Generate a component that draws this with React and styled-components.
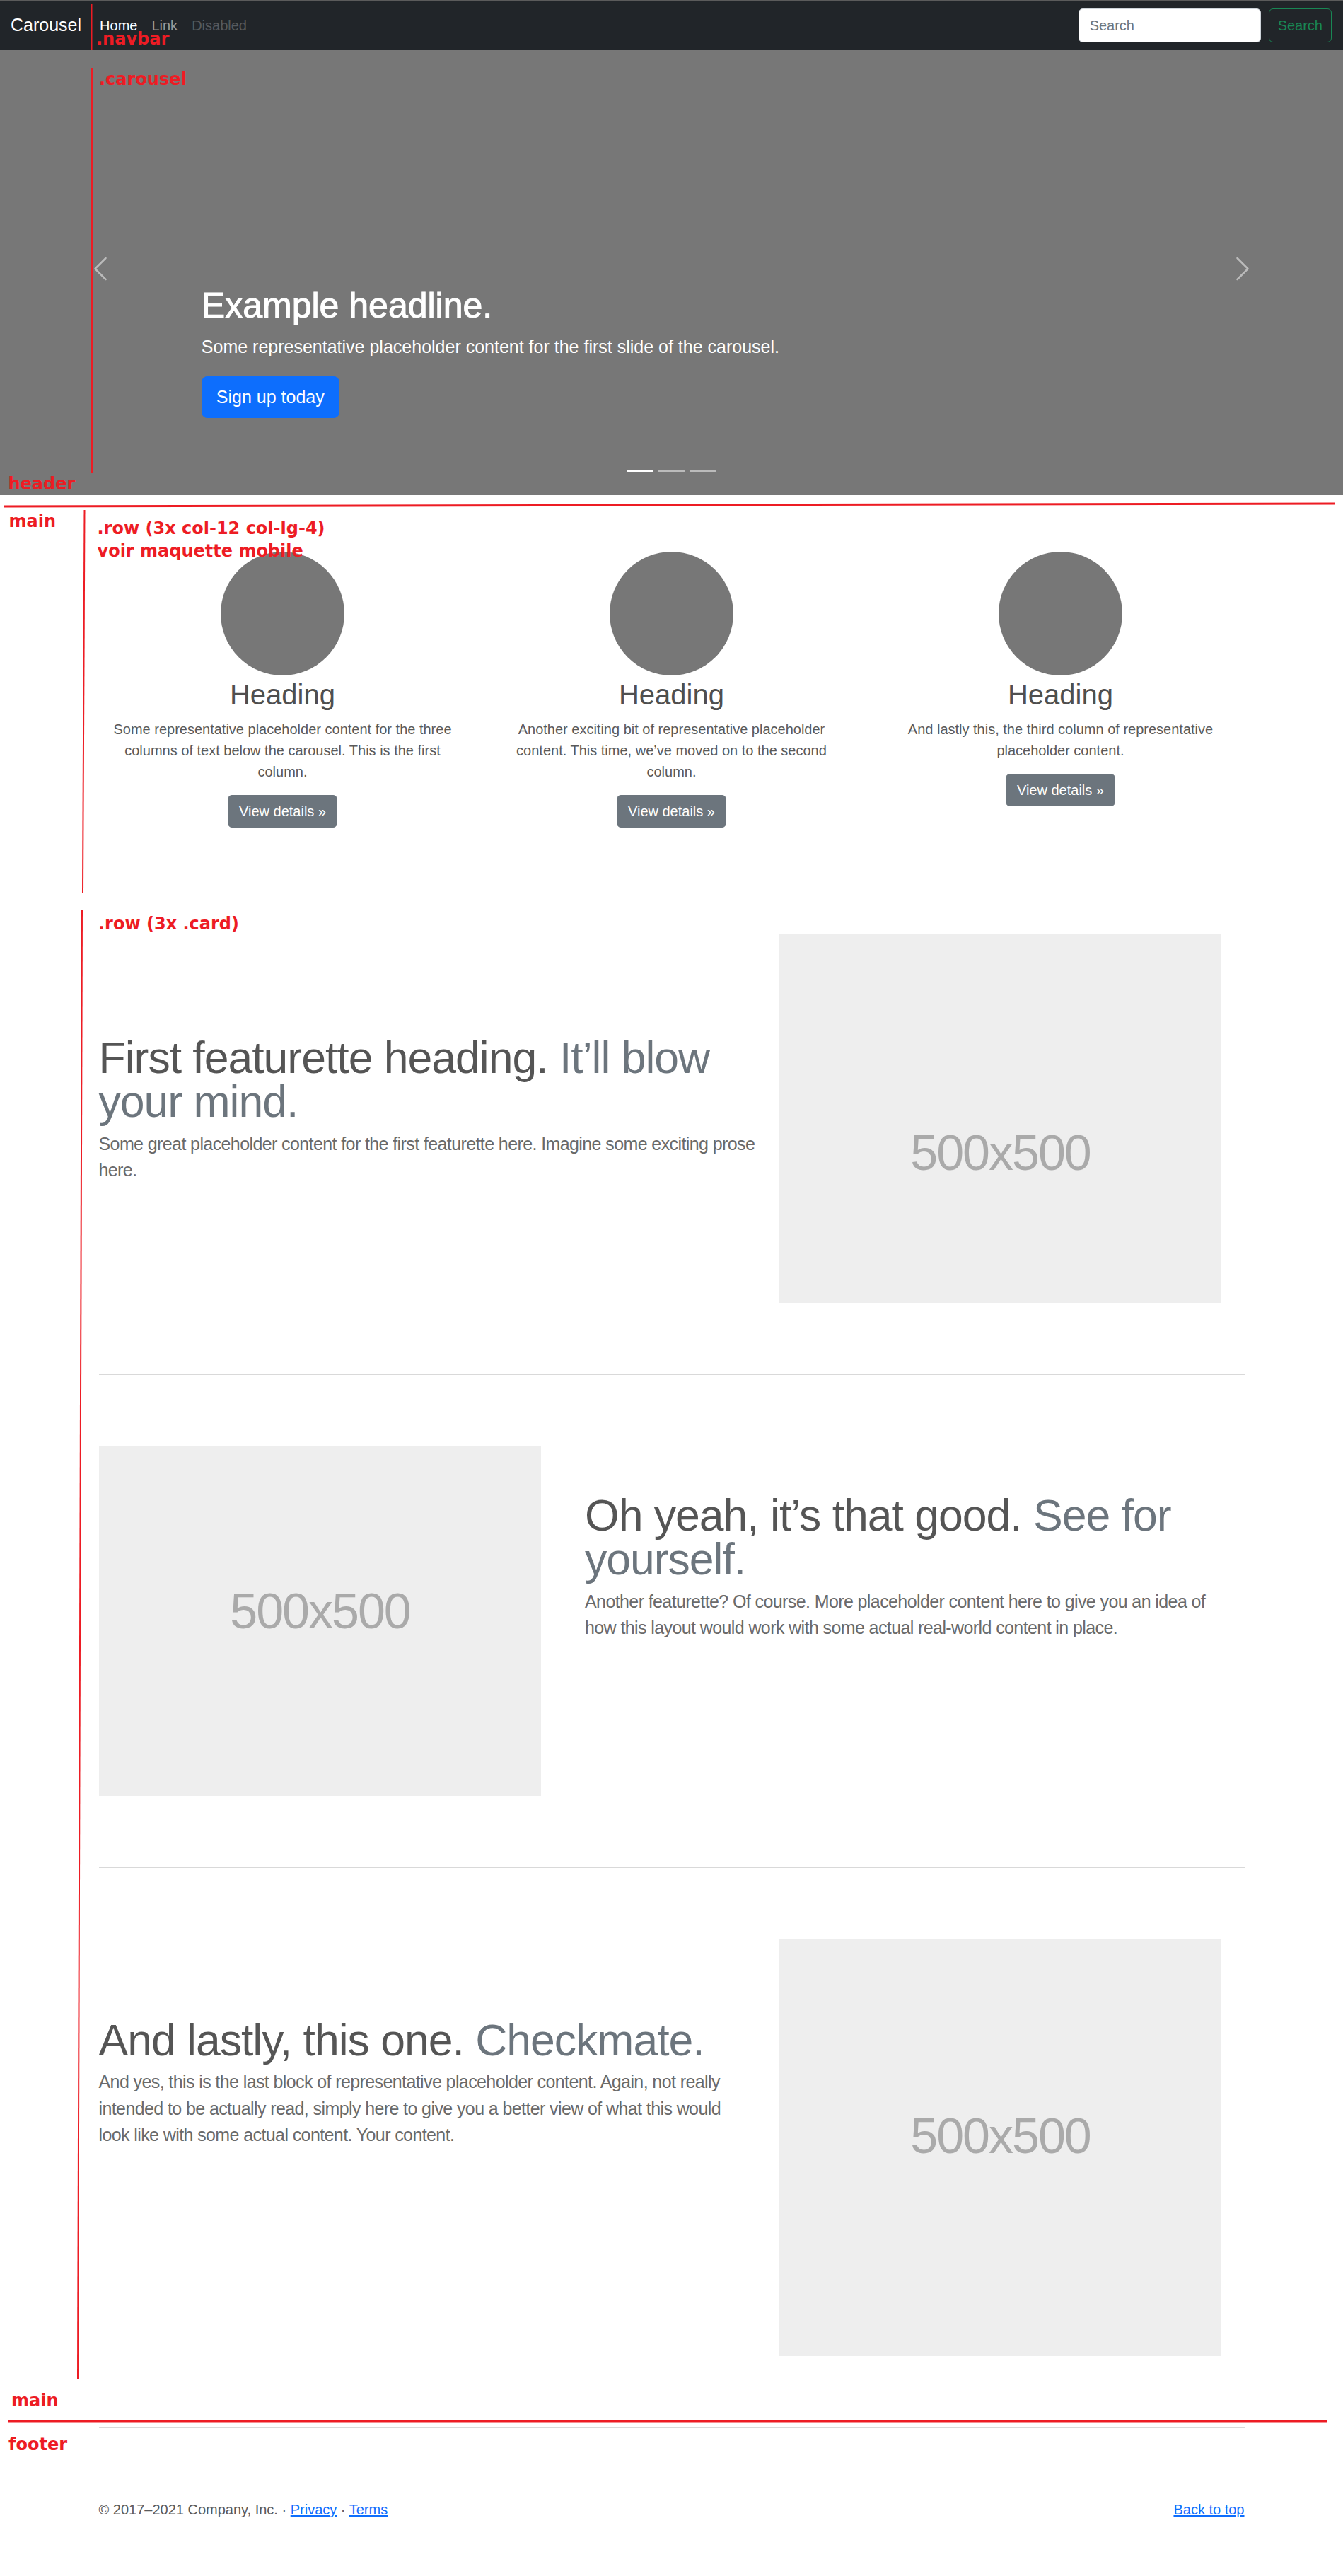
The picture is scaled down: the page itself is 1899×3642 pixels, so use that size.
import React from 'react';
import styled, { createGlobalStyle } from 'styled-components';

const GlobalStyle = createGlobalStyle`
  *, *::before, *::after {
    box-sizing: border-box;
  }
  body {
    margin: 0;
    font-family: "Liberation Sans", Arial, sans-serif;
    font-size: 20px;
    line-height: 1.5;
    color: #5a5a5a;
    background: #fff;
  }
`;

const Page = styled.div`
  position: relative;
  padding-bottom: 56px;
`;

/* ---------- navbar ---------- */

const Navbar = styled.nav`
  display: flex;
  align-items: center;
  height: 71px;
  padding: 0 16px 0 15px;
  background: #212529;
  border-top: 1px solid #5b5b5b;
`;

const Brand = styled.a`
  margin-right: 16px;
  font-size: 25px;
  line-height: 1.5;
  color: #fff;
  text-decoration: none;
`;

const NavLinks = styled.ul`
  display: flex;
  flex: 1;
  margin: 0;
  padding: 0;
  list-style: none;
`;

const linkColors = {
  active: '#fff',
  normal: 'rgba(255, 255, 255, 0.55)',
  disabled: 'rgba(255, 255, 255, 0.25)',
};

const NavLink = styled.a`
  display: block;
  padding: 0 10px;
  color: ${(p) => linkColors[p.$state]};
  text-decoration: none;
`;

const SearchForm = styled.form`
  display: flex;
  gap: 11px;
`;

const SearchInput = styled.input`
  width: 258px;
  height: 48px;
  padding: 7px 15px;
  font-family: inherit;
  font-size: 20px;
  color: #212529;
  background: #fff;
  border: 1px solid #ced4da;
  border-radius: 6px;
  outline: none;
  &::placeholder {
    color: #6c757d;
  }
`;

const OutlineButton = styled.button`
  height: 48px;
  padding: 0 12px;
  font-family: inherit;
  font-size: 20px;
  color: #198754;
  background: transparent;
  border: 1px solid #198754;
  border-radius: 6px;
`;

/* ---------- carousel ---------- */

const Carousel = styled.section`
  position: relative;
  height: 629px;
  background: #777;
`;

const Control = styled.button`
  position: absolute;
  top: -11px;
  bottom: 0;
  ${(p) => p.$side}: 0;
  width: 15%;
  display: flex;
  align-items: center;
  justify-content: center;
  padding: 0;
  background: none;
  border: 0;
  opacity: 0.5;
`;

const Indicators = styled.div`
  position: absolute;
  left: 0;
  right: 0;
  bottom: 32px;
  display: flex;
  justify-content: center;
  gap: 8px;
`;

const Indicator = styled.span`
  width: 37px;
  height: 4px;
  background: #fff;
  opacity: ${(p) => (p.$active ? 1 : 0.5)};
`;

const Caption = styled.div`
  position: absolute;
  left: 15%;
  right: 15%;
  bottom: 109px;
  display: flex;
  flex-direction: column;
  align-items: flex-start;
  color: #fff;
`;

const Headline = styled.h1`
  margin: 0 0 10px;
  font-size: 50px;
  font-weight: 500;
  line-height: 1.2;
  -webkit-text-stroke: 1px #fff;
`;

const CaptionText = styled.p`
  margin: 0 0 22px;
  font-size: 25px;
  line-height: 1.5;
`;

const PrimaryButton = styled.a`
  padding: 10px 20px;
  font-size: 25px;
  line-height: 1.5;
  color: #fff;
  background: #0d6efd;
  border: 1px solid #0d6efd;
  border-radius: 8px;
  text-decoration: none;
`;

/* ---------- marketing ---------- */

const Container = styled.div`
  width: 1650px;
  max-width: 100%;
  margin: 0 auto;
  padding: 0 15px;
`;

const Marketing = styled(Container)`
  margin-top: 80px;
`;

const Row = styled.div`
  display: flex;
  margin: 0 -15px;
`;

const Column = styled.div`
  display: flex;
  flex-direction: column;
  align-items: center;
  width: ${(p) => (p.$span / 12) * 100}%;
  padding: 0 15px;
  text-align: center;
`;

const Circle = styled.div`
  width: 175px;
  height: 175px;
  margin-bottom: 3px;
  border-radius: 50%;
  background: #777;
`;

const ColumnHeading = styled.h2`
  margin: 0 0 10px;
  font-size: 40px;
  font-weight: 400;
  line-height: 1.2;
  color: #4f4f4f;
`;

const ColumnText = styled.p`
  margin: 0 15px 18px;
`;

const SecondaryButton = styled.a`
  padding: 7px 15px;
  color: #fff;
  background: #6c757d;
  border: 1px solid #6c757d;
  border-radius: 6px;
  text-decoration: none;
`;

/* ---------- featurettes ---------- */

const Features = styled(Container)`
  margin-top: 149.5px;
`;

const Featurette = styled.div`
  display: flex;
  flex-direction: ${(p) => (p.$reverse ? 'row-reverse' : 'row')};
  margin: 0 -15px;
`;

const FeatureText = styled.div`
  width: 58.3333%;
  padding: ${(p) => p.$offset}px 15px 0;
`;

const FeatureMedia = styled.div`
  width: 41.6667%;
  padding: 0 15px;
`;

const FeatureHeading = styled.h2`
  margin: 0 0 10px;
  font-size: 62.5px;
  font-weight: 400;
  line-height: 1;
  letter-spacing: -1px;
  color: #555;
`;

const Muted = styled.span`
  color: #6c757d;
`;

const Lead = styled.p`
  margin: 0 0 20px;
  font-size: 25px;
  line-height: 1.5;
  letter-spacing: -0.6px;
  color: #6a6a6a;
`;

const Line = styled.span`
  display: block;
  white-space: nowrap;
`;

const PlaceholderSvg = styled.svg`
  display: block;
  text {
    font-family: "Liberation Sans", Arial, sans-serif;
    font-size: 70px;
    letter-spacing: -2px;
  }
`;

const Divider = styled.hr`
  height: 2px;
  margin: 100px 0;
  border: 0;
  background: #d9d9d9;
`;

/* ---------- footer ---------- */

const Footer = styled(Container)`
  display: flex;
  justify-content: space-between;
`;

const FooterText = styled.p`
  margin: 0 0 20px;
`;

const FooterLink = styled.a`
  color: #0d6efd;
  text-decoration: underline;
`;

/* ---------- annotations ---------- */

const Overlay = styled.div`
  position: absolute;
  inset: 0;
  overflow: hidden;
  pointer-events: none;
`;

const MarkLines = styled.svg`
  position: absolute;
  top: 0;
  left: 0;
`;

const Note = styled.span`
  position: absolute;
  left: ${(p) => p.$x}px;
  top: ${(p) => p.$y}px;
  font-family: "DejaVu Sans", sans-serif;
  font-size: 24px;
  font-weight: 700;
  line-height: 32px;
  color: #ed1c24;
  white-space: nowrap;
`;

const columns = [
  {
    text: [
      'Some representative placeholder content for the three',
      'columns of text below the carousel. This is the first',
      'column.',
    ],
  },
  {
    text: [
      'Another exciting bit of representative placeholder',
      'content. This time, we’ve moved on to the second',
      'column.',
    ],
  },
  {
    text: [
      'And lastly this, the third column of representative',
      'placeholder content.',
    ],
  },
];

const featurettes = [
  {
    title: 'First featurette heading. ',
    muted: 'It’ll blow your mind.',
    lead: [
      'Some great placeholder content for the first featurette here. Imagine some exciting prose',
      'here.',
    ],
    offset: 144,
    height: 522,
    textY: 334,
  },
  {
    title: 'Oh yeah, it’s that good. ',
    muted: 'See for yourself.',
    lead: [
      'Another featurette? Of course. More placeholder content here to give you an idea of',
      'how this layout would work with some actual real-world content in place.',
    ],
    offset: 67,
    height: 495,
    textY: 258,
    reverse: true,
  },
  {
    title: 'And lastly, this one. ',
    muted: 'Checkmate.',
    lead: [
      'And yes, this is the last block of representative placeholder content. Again, not really',
      'intended to be actually read, simply here to give you a better view of what this would',
      'look like with some actual content. Your content.',
    ],
    offset: 112,
    height: 590,
    textY: 303,
  },
];

const notes = [
  { x: 136, y: 38.6, text: ['.navbar'] },
  { x: 140, y: 95.6, text: ['.carousel'] },
  { x: 11.5, y: 667.6, text: ['header'] },
  { x: 12.5, y: 720.6, text: ['main'] },
  { x: 137.5, y: 730.6, text: ['.row (3x col-12 col-lg-4)', 'voir maquette mobile'] },
  { x: 139, y: 1289.6, text: ['.row (3x .card)'] },
  { x: 16, y: 3377.6, text: ['main'] },
  { x: 12, y: 3439.6, text: ['footer'] },
];

const marks = [
  { x1: 129.5, y1: 6, x2: 129.5, y2: 71, w: 2 },
  { x1: 130, y1: 96, x2: 130, y2: 669, w: 2 },
  { x1: 6, y1: 716, x2: 1888, y2: 712, w: 3 },
  { x1: 119.5, y1: 721, x2: 117, y2: 1263, w: 2 },
  { x1: 116, y1: 1286, x2: 110, y2: 3363, w: 2 },
  { x1: 12, y1: 3423, x2: 1877, y2: 3423, w: 3 },
];

const Chevron = ({ flip }) => (
  <svg width="40" height="40" viewBox="0 0 16 16" fill="#fff">
    <path
      transform={flip ? 'translate(16 0) scale(-1 1)' : undefined}
      d="M11.354 1.646a.5.5 0 0 1 0 .708L5.707 8l5.647 5.646a.5.5 0 0 1-.708.708l-6-6a.5.5 0 0 1 0-.708l6-6a.5.5 0 0 1 .708 0z"
    />
  </svg>
);

const Placeholder = ({ height, textY }) => (
  <PlaceholderSvg width="625" height={height}>
    <rect width="100%" height="100%" fill="#eee" />
    <text x="50%" y={textY} textAnchor="middle" fill="#aaa">
      500x500
    </text>
  </PlaceholderSvg>
);

const Annotations = () => (
  <Overlay>
    <MarkLines width="1899" height="3642">
      {marks.map((m, i) => (
        <line
          key={i}
          x1={m.x1}
          y1={m.y1}
          x2={m.x2}
          y2={m.y2}
          stroke="#ed1c24"
          strokeWidth={m.w}
        />
      ))}
    </MarkLines>
    {notes.map((n, i) => (
      <Note key={i} $x={n.x} $y={n.y}>
        {n.text.map((t, j) => (
          <Line key={j}>{t}</Line>
        ))}
      </Note>
    ))}
  </Overlay>
);

export default function App() {
  return (
    <Page>
      <GlobalStyle />

      <header>
        <Navbar>
          <Brand href="#">Carousel</Brand>
          <NavLinks>
            <li><NavLink $state="active" href="#">Home</NavLink></li>
            <li><NavLink $state="normal" href="#">Link</NavLink></li>
            <li><NavLink $state="disabled">Disabled</NavLink></li>
          </NavLinks>
          <SearchForm onSubmit={(e) => e.preventDefault()}>
            <SearchInput type="search" placeholder="Search" />
            <OutlineButton type="submit">Search</OutlineButton>
          </SearchForm>
        </Navbar>

        <Carousel>
          <Caption>
            <Headline>Example headline.</Headline>
            <CaptionText>
              Some representative placeholder content for the first slide of the carousel.
            </CaptionText>
            <PrimaryButton href="#">Sign up today</PrimaryButton>
          </Caption>
          <Control $side="left" aria-label="Previous">
            <Chevron />
          </Control>
          <Control $side="right" aria-label="Next">
            <Chevron flip />
          </Control>
          <Indicators>
            <Indicator $active />
            <Indicator />
            <Indicator />
          </Indicators>
        </Carousel>
      </header>

      <main>
        <Marketing>
          <Row>
            {columns.map((c, i) => (
              <Column key={i} $span={4}>
                <Circle />
                <ColumnHeading>Heading</ColumnHeading>
                <ColumnText>
                  {c.text.map((t, j) => (
                    <Line key={j}>{t}</Line>
                  ))}
                </ColumnText>
                <SecondaryButton href="#">View details »</SecondaryButton>
              </Column>
            ))}
          </Row>
        </Marketing>

        <Features>
          {featurettes.map((f, i) => (
            <React.Fragment key={i}>
              <Featurette $reverse={f.reverse}>
                <FeatureText $offset={f.offset}>
                  <FeatureHeading>
                    {f.title}
                    <Muted>{f.muted}</Muted>
                  </FeatureHeading>
                  <Lead>
                    {f.lead.map((t, j) => (
                      <Line key={j}>{t}</Line>
                    ))}
                  </Lead>
                </FeatureText>
                <FeatureMedia>
                  <Placeholder height={f.height} textY={f.textY} />
                </FeatureMedia>
              </Featurette>
              <Divider />
            </React.Fragment>
          ))}
        </Features>
      </main>

      <Footer as="footer">
        <FooterText>
          © 2017–2021 Company, Inc. · <FooterLink href="#">Privacy</FooterLink> ·{' '}
          <FooterLink href="#">Terms</FooterLink>
        </FooterText>
        <FooterText>
          <FooterLink href="#">Back to top</FooterLink>
        </FooterText>
      </Footer>

      <Annotations />
    </Page>
  );
}
